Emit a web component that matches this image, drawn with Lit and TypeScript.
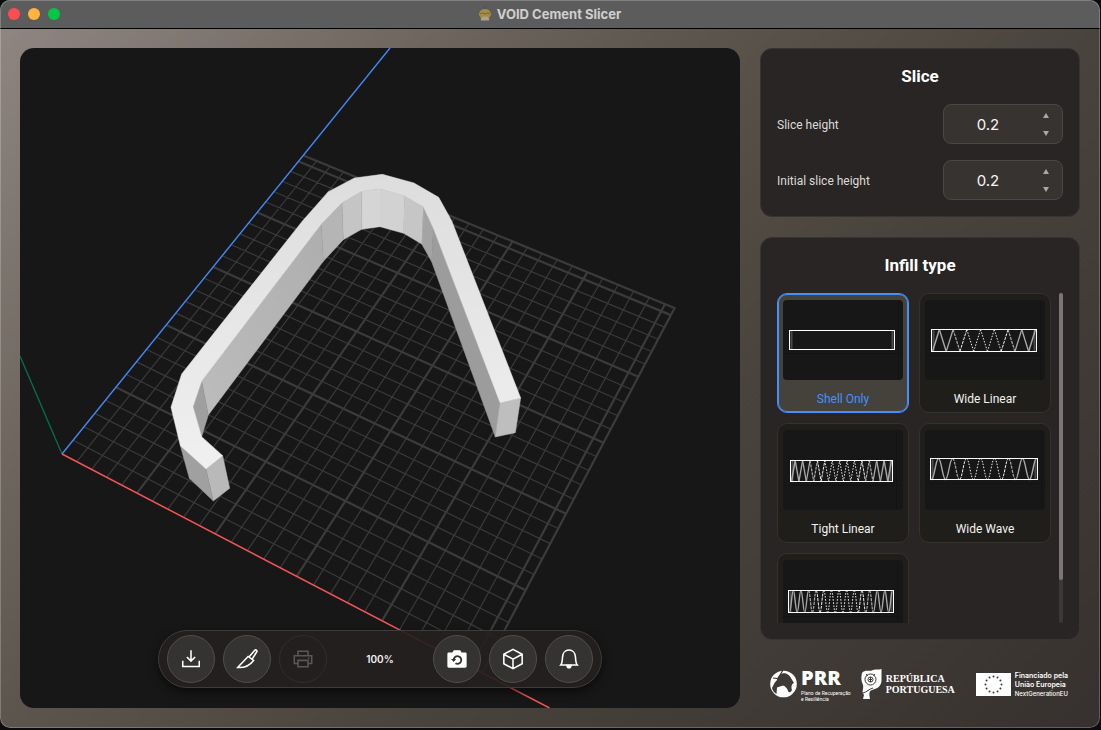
import { LitElement, html, css, svg } from "lit";
import { customElement, property, state } from "lit/decorators.js";
import { classMap } from "lit/directives/class-map.js";

type Pt = [number, number];

/* ---------- build plate: unit square projected onto the screen ---------- */
const CELLS = 25.6;
const [P00, P10, P11, P01]: Pt[] = [[62, 454], [482, 673], [674.6, 308], [303.5, 155.5]];
const e1: Pt = [P10[0] - P11[0], P10[1] - P11[1]];
const e2: Pt = [P01[0] - P11[0], P01[1] - P11[1]];
const sm: Pt = [P00[0] - P10[0] + P11[0] - P01[0], P00[1] - P10[1] + P11[1] - P01[1]];
const det = e1[0] * e2[1] - e2[0] * e1[1];
const g = (sm[0] * e2[1] - e2[0] * sm[1]) / det;
const h = (e1[0] * sm[1] - sm[0] * e1[1]) / det;
const project = (u: number, v: number): string => {
  const w = 1 + g * u + h * v;
  const c = (i: number) =>
    ((P10[i] - P00[i] + g * P10[i]) * u + (P01[i] - P00[i] + h * P01[i]) * v + P00[i]) / w;
  return `${c(0).toFixed(2)} ${c(1).toFixed(2)}`;
};
const gridPath = (major: boolean): string => {
  let d = "";
  for (let i = 1; i < CELLS; i++) {
    if ((i % 5 === 0) !== major) continue;
    const t = i / CELLS;
    d += `M${project(t, 0)}L${project(t, 1)}M${project(0, t)}L${project(1, t)}`;
  }
  if (major) d += `M${project(1, 0)}L${project(1, 1)}L${project(0, 1)}`;
  return d;
};

/* ---------- printed part, one entry per visible face ---------- */
const FACES: [string, string][] = [
  ["#9c9c9c", "850,205 1050,728 1036,831 845,305"],
  ["#a4a4a4", "820,140 850,205 845,305 815,252"],
  ["#c6c6c6", "763,107 820,140 815,252 761,220"],
  ["#d2d2d2", "690,86 763,107 761,220 690,200"],
  ["#d5d5d5", "635,94 690,86 690,200 635,208"],
  ["#c5c5c5", "576,128 635,94 635,208 580,239"],
  ["#b5b5b5", "514,192 576,128 580,239 520,304"],
  ["url(#wall)", "155,663 514,192 520,304 175,765"],
  ["#9f9f9f", "129,740 155,663 175,765 155,830"],
  ["#b9b9b9", "168,927 218,887 239,985 190,1023"],
  ["#a0a0a0", "91,857 168,927 190,1023 118,955"],
  ["#bebebe", "1050,728 1112,714 1096,818 1036,831"],
  ["url(#top)", "63,742 95,642 458,182 535,95 613,54 697,43 792,69 866,112 905,182 1112,714 1050,728 850,205 820,140 763,107 690,86 635,94 576,128 514,192 155,663 129,740 155,830 218,887 168,927 91,857"],
];

@customElement("build-view")
class BuildView extends LitElement {
  static styles = css`
    :host { display: block; }
    .scene { display: block; width: 100%; height: 100%; }
  `;
  render() {
    return html`<svg class="scene" viewBox="20 48 720 660" preserveAspectRatio="xMidYMid slice" role="img" aria-label="Build plate">
      <defs>
        <linearGradient id="top" x1="0" y1="0" x2="0" y2="1">
          <stop offset="0" stop-color="#dddddd"></stop><stop offset="1" stop-color="#f0f0f0"></stop>
        </linearGradient>
        <linearGradient id="wall" x1="0" y1="1" x2="1" y2="0">
          <stop offset="0" stop-color="#bcbcbc"></stop><stop offset="1" stop-color="#aeaeae"></stop>
        </linearGradient>
      </defs>
      <path d=${gridPath(false)} stroke="#3a3a3a" stroke-width="1.2" fill="none"></path>
      <path d=${gridPath(true)} stroke="#3b3b3b" stroke-width="2.2" fill="none"></path>
      <path d="M62 454L20 356" stroke="#00734b" stroke-width="1.3"></path>
      <path d="M62 454L390 48" stroke="#4488f5" stroke-width="1.4"></path>
      <path d="M62 454L549.5 708" stroke="#f25555" stroke-width="1.5"></path>
      <g transform="translate(150 160) scale(0.33333)" stroke-width="1.5" stroke-linejoin="round">
        ${FACES.map(([fill, pts]) => svg`<polygon fill=${fill} stroke=${fill} points=${pts}></polygon>`)}
      </g>
    </svg>`;
  }
}

/* ---------- numeric field ---------- */
@customElement("number-field")
class NumberField extends LitElement {
  @property() label = "";
  @property({ type: Number }) value = 0;
  static styles = css`
    :host { display: block; }
    .row { display: flex; align-items: center; justify-content: space-between; }
    .name { padding-top: 2px; font-family: Roboto, sans-serif; font-size: 12px; color: #dddbd8; }
    .box {
      display: flex; box-sizing: border-box; width: 120px; height: 40px; padding-right: 2px;
      background: #373330; border: 1px solid #4b4744; border-radius: 8px;
    }
    .num {
      flex: 1; min-width: 0; border: 0; padding: 0; background: none; color: #f7f6f5;
      font: 15px Inter, sans-serif; text-align: center; outline: none; appearance: textfield;
    }
    .num::-webkit-inner-spin-button { display: none; }
    .steps { display: flex; flex-direction: column; width: 28px; padding-top: 1px; }
    .step {
      flex: 1; display: grid; place-items: center; padding: 0; border: 0; background: none; cursor: pointer;
    }
    .arrow { display: block; width: 6px; height: 5px; fill: #aaa7a4; }
  `;
  private step(d: number) { this.value = Math.round((this.value + d) * 10) / 10; }
  render() {
    return html`<div class="row">
      <label class="name" for="n">${this.label}</label>
      <div class="box">
        <input class="num" id="n" type="number" step="0.1" .value=${String(this.value)}
          @change=${(e: Event) => (this.value = Number((e.target as HTMLInputElement).value))}>
        <div class="steps">
          <button class="step" aria-label="Increase" @click=${() => this.step(0.1)}>
            <svg class="arrow" viewBox="0 0 6 5"><path d="M3 0L6 5H0z"></path></svg></button>
          <button class="step" aria-label="Decrease" @click=${() => this.step(-0.1)}>
            <svg class="arrow" viewBox="0 0 6 5"><path d="M3 5L0 0H6z"></path></svg></button>
        </div>
      </div>
    </div>`;
  }
}

/* ---------- infill thumbnails, drawn in a 120 x 80 box ---------- */
interface Infill { name: string; box: [number, number, number, number]; waves: number; curve?: boolean; }
const INFILLS: Infill[] = [
  { name: "Shell Only", box: [6.5, 30.5, 105, 19], waves: 0 },
  { name: "Wide Linear", box: [6.5, 29.5, 105, 22], waves: 8 },
  { name: "Tight Linear", box: [7.5, 30.5, 102, 21], waves: 14 },
  { name: "Wide Wave", box: [5.5, 28.5, 107, 21], waves: 8, curve: true },
  { name: "Tight Wave", box: [5.5, 30.5, 105, 22], waves: 14, curve: true },
];
/* Walls seen nearly edge-on in the middle break up into dots; towards the ends they widen. */
const waveStrokes = ({ box: [x, y, w, ht], waves, curve }: Infill) => {
  const n = waves * 2 - 1;
  const s = (w - 2) / n;
  return Array.from({ length: Math.max(n, 0) }, (_, i) => {
    const a = x + 1 + i * s;
    const b = a + s;
    const from = i % 2 ? y : y + ht;
    const to = i % 2 ? y + ht : y;
    const d = curve
      ? `M${a} ${from}C${a + s * 0.4} ${from} ${b - s * 0.4} ${to} ${b} ${to}`
      : `M${a} ${from}L${b} ${to}`;
    const off = Math.abs((i + 0.5) / n - 0.5) * 2;
    return svg`<path d=${d} fill="none" stroke=${off > 0.5 ? "#a8a8a8" : "#f0f0f0"}
      stroke-width=${off > 0.5 ? 0.9 + off * 0.6 : 1}
      stroke-dasharray=${off < 0.35 ? "1.5 1.5" : off < 0.6 ? "3 1" : "none"}></path>`;
  });
};

@customElement("infill-picker")
class InfillPicker extends LitElement {
  @state() private selected = "Shell Only";
  static styles = css`
    :host { display: flex; gap: 8px; min-height: 0; }
    .scroll { flex: 1; overflow-y: auto; scrollbar-width: none; }
    .grid { display: grid; grid-template-columns: 1fr 1fr; gap: 10px; }
    .tile {
      position: relative; box-sizing: border-box; height: 120px; padding: 6px 5px 0; cursor: pointer;
      display: flex; flex-direction: column; background: #1f1e1b; border: 1px solid #34312f; border-radius: 10px;
    }
    .tile.on { background: #45413b; border-color: #4790fb; box-shadow: inset 0 0 0 1px #4790fb; }
    .radio { position: absolute; inset: 0; margin: 0; opacity: 0; cursor: pointer; }
    .thumb { display: block; width: 100%; height: 80px; background: #171717; border-radius: 4px; }
    .name { flex: 1; padding-top: 6px; display: grid; place-items: center; font-family: Roboto, sans-serif; font-size: 12px; color: #f3f2f0; }
    .on .name { color: #4790fb; }
    .track { width: 4px; border-radius: 2px; background: #3b3836; }
    .bar { height: 87%; border-radius: 2px; background: #7b7674; }
  `;
  render() {
    return html`
      <div class="scroll"><div class="grid" role="radiogroup" aria-label="Infill type">
        ${INFILLS.map((f) => {
          const [x, y, w, ht] = f.box;
          return html`<label class=${classMap({ tile: true, on: f.name === this.selected })}>
            <input class="radio" type="radio" name="infill" .checked=${f.name === this.selected}
              @change=${() => (this.selected = f.name)}>
            <svg class="thumb" viewBox="0 0 120 80">
              <path d="M0 ${y + ht + 4}H120M${x + w + 4} 0V80" stroke="#131313" fill="none"></path>
              <path d="M${x + 2} ${y}V${y + ht}M${x + w - 2} ${y}V${y + ht}" stroke="#4a4a4a" stroke-width="2"></path>
              ${waveStrokes(f)}
              <rect x=${x} y=${y} width=${w} height=${ht} stroke="#fff" fill="none"></rect>
            </svg>
            <span class="name">${f.name}</span>
          </label>`;
        })}
      </div></div>
      <div class="track"><div class="bar"></div></div>`;
  }
}

/* ---------- toolbar icons, 24 x 24 ---------- */
const ICONS = {
  load: svg`<path d="M12 2.5V14M7.5 9.8L12 14.3L16.5 9.8M3 14V20.2H21V14"></path>`,
  knife: svg`<path d="M1.8 21.3L13.2 9.2L19.2 13.6C15.5 18.5 9 21.8 1.8 21.3ZM14.4 9.6L20.3 2.6C21.5 1.2 23.5 2.8 22.5 4.4L17.6 12.2"></path>`,
  print: svg`<path d="M6.5 8V3.5H17.5V8M6.5 17H2.5V8.5H21.5V17H17.5M6.5 13.5H17.5V20.5H6.5ZM17.5 11.2H19"></path>`,
  camera: svg`<path fill="currentColor" stroke="none" fill-rule="evenodd" d="M8.5 2.5H15.5L17 5H21Q22.5 5 22.5 6.5V20Q22.5 21.5 21 21.5H3Q1.5 21.5 1.5 20V6.5Q1.5 5 3 5H7Z"></path>
    <path d="M8.3 12.8A4.2 4.2 0 1 1 10.3 16.7" stroke="#343230" stroke-width="2"></path>
    <path d="M5.4 12H11.2L8.3 15.2Z" fill="#343230" stroke="none"></path>`,
  cube: svg`<path d="M12 1.5L22 6.8V17.2L12 22.5L2 17.2V6.8ZM2 6.8L12 12.2L22 6.8M12 12.2V22.5"></path>`,
  bell: svg`<path d="M3 18.5H21C19.3 16.5 19.3 14.5 19.1 10C18.9 5.2 15.8 2.2 12 2.2C8.2 2.2 5.1 5.2 4.9 10C4.7 14.5 4.7 16.5 3 18.5Z"></path><path d="M9.8 19C10 22.5 14 22.5 14.2 19Z" fill="currentColor"></path>`,
};

@customElement("tool-bar")
class ToolBar extends LitElement {
  static styles = css`
    :host {
      display: flex; align-items: center; gap: 8px; padding: 4px 8px; border: 1px solid #3f3b39;
      border-radius: 29px; background: rgba(37, 32, 31, 0.93); box-shadow: 0 4px 10px rgba(0, 0, 0, 0.55);
    }
    .tool {
      display: grid; place-items: center; box-sizing: border-box; width: 48px; height: 48px; padding: 0;
      border: 1px solid #504d4a; border-radius: 50%; background: rgba(54, 52, 50, 0.97); color: #fff; cursor: pointer;
    }
    .tool:disabled { background: none; border-color: #322d2c; color: #5b5755; cursor: default; }
    .icon { width: 22px; height: 22px; fill: none; stroke: currentColor; stroke-width: 1.7; }
    .zoom { width: 90px; text-align: center; font-size: 10px; font-weight: 600; color: #f1efed; }
  `;
  private tool(label: string, icon: unknown, off = false) {
    return html`<button class="tool" aria-label=${label} ?disabled=${off}><svg class="icon" viewBox="0 0 24 24">${icon}</svg></button>`;
  }
  render() {
    return html`${this.tool("Load model", ICONS.load)}${this.tool("Slice", ICONS.knife)}${this.tool("Print", ICONS.print, true)}
      <span class="zoom">100%</span>
      ${this.tool("Reset camera", ICONS.camera)}${this.tool("Perspective", ICONS.cube)}${this.tool("Notifications", ICONS.bell)}`;
  }
}

/* ---------- funding logos ---------- */
@customElement("funding-logos")
class FundingLogos extends LitElement {
  static styles = css`
    :host { display: flex; align-items: center; gap: 10px; height: 48px; padding: 0 12px 0 10px; color: #fff; }
    .logo { display: flex; align-items: center; gap: 4px; }
    .logo:last-child { margin-left: auto; }
    .words { display: flex; flex-direction: column; white-space: nowrap; }
    .prr { font: 800 20px/24px "Open Sans", sans-serif; }
    .tiny { font: 5px/6px Roboto, sans-serif; }
    .pt { font: bold 10px/11px "Liberation Serif", serif; }
    .eu { font: 600 7px/9px Inter, sans-serif; }
    .next { font-size: 6px; font-weight: 500; }
    .mark { display: block; flex: none; }
  `;
  render() {
    const stars = Array.from({ length: 12 }, (_, i) => {
      const a = (i * Math.PI) / 6;
      return svg`<circle cx=${17.5 + 8 * Math.sin(a)} cy=${11.5 - 8 * Math.cos(a)} r="1"></circle>`;
    });
    return html`
      <div class="logo">
        <svg class="mark" width="27" height="28" viewBox="0 0 27 28">
          <circle cx="13.5" cy="14" r="13.3" fill="#fff"></circle>
          <path fill="#3f3a35" d="M7 10C8 5 12 2.5 16 3.5C20 5 21.5 9 24 13C21.5 14 21 17 22 20C21 22 20 22.5 18.5 22C17.5 19 15.5 16 13 15.5L7 17.5L6.5 24C4 22.5 2.5 20.5 2 18L4.5 13Z"></path>
          <path stroke="#3f3a35" stroke-width="1.2" fill="none" d="M3 8L8 8.5L13 0"></path>
        </svg>
        <div class="words"><span class="prr">PRR</span><span class="tiny">Plano de Recuperação</span><span class="tiny">e Resiliência</span></div>
      </div>
      <div class="logo">
        <svg class="mark" width="21" height="30" viewBox="0 0 21 30">
          <path fill="#fff" d="M1 4C4 0 8 3 12 1C15 0 18 1 20.5 0V12C20 18 15 20 11 21C8 22 8 24 9 30H2L3 26C0 22 3 20 2 16C0 12 0 8 1 4Z"></path>
          <g fill="none" stroke="#3e3934"><circle cx="9.5" cy="10.5" r="5.5"></circle><circle cx="9.5" cy="10.5" r="2.5"></circle><path d="M2 24C6 23 8 20 12 19M5 5L6.5 7M14 5L12.5 7M9.5 8V13M8 10.5H11"></path></g>
        </svg>
        <div class="words pt"><span>REPÚBLICA</span><span>PORTUGUESA</span></div>
      </div>
      <div class="logo">
        <svg class="mark" width="35" height="23" viewBox="0 0 35 23"><rect width="35" height="23" fill="#fff"></rect><g fill="#3e3934">${stars}</g></svg>
        <div class="words eu"><span>Financiado pela</span><span>União Europeia</span><span class="next">NextGenerationEU</span></div>
      </div>`;
  }
}

@customElement("app-root")
class AppRoot extends LitElement {
  static styles = css`
    :host { display: block; height: 100vh; box-sizing: border-box; padding: 0 1px 2px 0; background: #0b0b10; font-family: Inter, sans-serif; color: #fff; }
    .window {
      position: relative; display: flex; flex-direction: column; height: 100%; box-sizing: border-box; overflow: hidden; border-radius: 10px;
      background: linear-gradient(135deg, #918883 0%, #6e665f 25%, #5c554d 40%, #48433c 62%, #36312e 100%);
    }
    .window::after { content: ""; position: absolute; inset: 0; border-radius: 10px; pointer-events: none; box-shadow: inset 0 0 0 1px rgba(255, 255, 255, 0.22); }
    .titlebar {
      flex: none; display: grid; grid-template-columns: 1fr auto 1fr; align-items: center; height: 28px;
      padding: 0 8px; background: #5c5c5c; border-bottom: 1px solid #000;
    }
    .lights { display: flex; gap: 8px; }
    .light { width: 12px; height: 12px; padding: 0; border: 0; border-radius: 50%; }
    .close { background: #ff4b53; }
    .min { background: #ffb340; }
    .max { background: #00c846; }
    .title { display: flex; align-items: center; gap: 6px; margin: 0; font-size: 13px; line-height: 16px; font-weight: 700; color: #cfcfcf; }
    .main { flex: 1; min-height: 0; display: grid; grid-template-columns: 1fr 320px; gap: 20px; padding: 19px 20px 20px; }
    .stage { position: relative; min-width: 0; min-height: 0; overflow: hidden; border-radius: 14px; background: #171717; }
    .view { width: 100%; height: 100%; }
    .tools { position: absolute; bottom: 20px; left: 50%; transform: translateX(-50%); }
    .side { display: flex; flex-direction: column; gap: 20px; min-height: 0; }
    .card { display: flex; flex-direction: column; gap: 16px; padding: 16px; border: 1px solid #383432; border-radius: 12px; background: #292524; }
    .infill { flex: 1; min-height: 0; }
    .picker { flex: 1; }
    .heading { margin: 0; font: 700 17px/23px Roboto, sans-serif; text-align: center; }
  `;
  render() {
    return html`<div class="window">
      <header class="titlebar">
        <div class="lights">
          <button class="light close" aria-label="Close"></button>
          <button class="light min" aria-label="Minimize"></button>
          <button class="light max" aria-label="Zoom"></button>
        </div>
        <h1 class="title">
          <svg width="12" height="16" viewBox="0 0 12 16"><circle cx="6" cy="2" r="2" fill="#55585a"></circle><path d="M0 9C0 1 12 1 12 9L10 12H2Z" fill="#a48d43"></path><path d="M1 8Q3 6 6 8Q9 6 11 8" stroke="#6f6450" fill="none"></path><path d="M2 14.5C0 9 12 9 10 14.5Z" fill="#aaa18e"></path></svg>
          VOID Cement Slicer
        </h1>
      </header>
      <main class="main">
        <section class="stage">
          <build-view class="view"></build-view>
          <tool-bar class="tools"></tool-bar>
        </section>
        <aside class="side">
          <section class="card">
            <h2 class="heading">Slice</h2>
            <number-field label="Slice height" .value=${0.2}></number-field>
            <number-field label="Initial slice height" .value=${0.2}></number-field>
          </section>
          <section class="card infill">
            <h2 class="heading">Infill type</h2>
            <infill-picker class="picker"></infill-picker>
          </section>
          <funding-logos></funding-logos>
        </aside>
      </main>
    </div>`;
  }
}
